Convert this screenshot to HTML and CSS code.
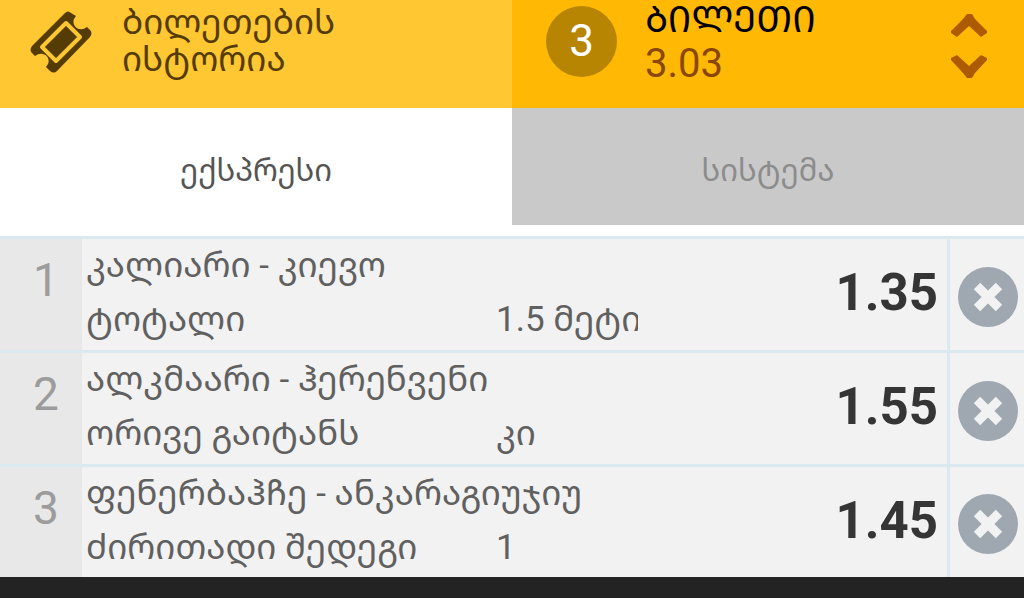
FILE: index.html
```
<!DOCTYPE html>
<html lang="ka">
<head>
    <meta charset="UTF-8">
    <meta name="viewport" content="width=device-width, initial-scale=1.0">
    <title>ბილეთი</title>
    <link rel="stylesheet" href="styles.css">
</head>
<body>
    <header class="top-bar">
        <a href="#" class="history">
            <svg class="ticket-icon" viewBox="0 0 62 62">
                <path fill="#553c04" d="M35 2Q38-1 41 2L46 5L44 8C42 13 46 18 50 18Q53 19 57 16L60 19Q63 22 60 26L27 60Q24 63 20 60L16 56L18 53C20 48 17 44 13 43Q9 42 5 45L2 42Q-1 39 2 35Z"/>
                <path fill="none" stroke="#ffc732" stroke-width="4" stroke-linejoin="round" d="M36 12L50 26L26 50L12 36Z"/>
            </svg>
            <span>ბილეთების<br>ისტორია</span>
        </a>
        <button class="ticket" type="button">
            <span class="count">3</span>
            <span class="ticket-info">
                <span class="ticket-title">ᲑᲘᲚᲔᲗᲘ</span>
                <span class="ticket-odds">3.03</span>
            </span>
            <svg class="arrows" viewBox="0 0 38 64">
                <path fill="#ad5b02" d="M17 0H22L25 5L37 17V19L31 23L19 12L7 23L1 19V17L13 5ZM17 64H22L25 59L37 46V44L31 41L19 52L7 41L1 44V46L13 59Z"/>
            </svg>
        </button>
    </header>

    <nav class="tabs">
        <button class="tab active" type="button">ექსპრესი</button>
        <button class="tab" type="button">სისტემა</button>
    </nav>

    <ul class="bets">
        <li class="bet">
            <div class="number">1</div>
            <div class="details">
                <p class="teams">კალიარი - კიევო</p>
                <p class="market"><span>ტოტალი</span><span class="pick">1.5 მეტი</span></p>
            </div>
            <div class="odds">1.35</div>
            <div class="remove">
                <button type="button" aria-label="წაშლა">
                    <svg viewBox="0 0 60 60"><path d="M19 19L41 41M41 19L19 41"/></svg>
                </button>
            </div>
        </li>
        <li class="bet">
            <div class="number">2</div>
            <div class="details">
                <p class="teams">ალკმაარი - ჰერენვენი</p>
                <p class="market"><span>ორივე გაიტანს</span><span class="pick">კი</span></p>
            </div>
            <div class="odds">1.55</div>
            <div class="remove">
                <button type="button" aria-label="წაშლა">
                    <svg viewBox="0 0 60 60"><path d="M19 19L41 41M41 19L19 41"/></svg>
                </button>
            </div>
        </li>
        <li class="bet">
            <div class="number">3</div>
            <div class="details">
                <p class="teams">ფენერბაჰჩე - ანკარაგიუჯიუ</p>
                <p class="market"><span>ძირითადი შედეგი</span><span class="pick">1</span></p>
            </div>
            <div class="odds">1.45</div>
            <div class="remove">
                <button type="button" aria-label="წაშლა">
                    <svg viewBox="0 0 60 60"><path d="M19 19L41 41M41 19L19 41"/></svg>
                </button>
            </div>
        </li>
    </ul>
</body>
</html>
```

FILE: styles.css
```
* {
    margin: 0;
    padding: 0;
    box-sizing: border-box;
}

body {
    font-family: Roboto, "Noto Sans Georgian", "DejaVu Sans Condensed", "DejaVu Sans", sans-serif;
    background: #232323;
    color: #606060;
    font-size: 35px;
}

button {
    border: none;
    font-family: inherit;
    cursor: pointer;
}

/* Top bar */
.top-bar {
    display: flex;
    height: 108px;
}

.history,
.ticket {
    width: 50%;
    display: flex;
    align-items: flex-start;
}

.history {
    gap: 30px;
    padding: 4px 30px;
    background: #ffc732;
    color: #553c04;
    line-height: 37px;
    text-decoration: none;
}

.ticket-icon {
    width: 62px;
    height: 62px;
    margin-top: 7px;
}

.ticket {
    gap: 28px;
    padding: 0 36px 0 34px;
    background: #ffb803;
    text-align: left;
}

.count {
    width: 71px;
    height: 71px;
    margin-top: 6px;
    border-radius: 50%;
    background: #b88502;
    color: #fff;
    font-size: 44px;
    line-height: 71px;
    text-align: center;
}

.ticket-info {
    flex: 1;
}

.ticket-title,
.ticket-odds {
    display: block;
}

.ticket-title {
    color: #000;
    font-size: 37px;
    line-height: 40px;
}

.ticket-odds {
    color: #8a4703;
    font-size: 40px;
    line-height: 48px;
}

.arrows {
    width: 38px;
    height: 64px;
    margin-top: 14px;
}

/* Tabs */
.tabs {
    display: flex;
    padding-bottom: 11px;
    background: #fff;
}

.tab {
    flex: 1;
    height: 117px;
    padding-top: 4px;
    background: #c9c9c9;
    color: #8c8c8c;
    font-size: 31px;
}

.tab.active {
    background: #fff;
    color: #555;
}

/* Bets */
.bets {
    list-style: none;
}

.bet {
    display: flex;
    border-top: 3px solid #dae8f0;
    background: #f2f2f2;
}

.number {
    width: 82px;
    padding: 14px 0 0 10px;
    background: #e8e8e8;
    color: #9c9c9c;
    font-size: 46px;
    line-height: 54px;
    text-align: center;
}

.details {
    flex: 1;
    padding: 0 0 3px 4px;
    line-height: 54px;
    white-space: nowrap;
}

.market {
    display: flex;
}

.market span:first-child {
    width: 410px;
}

.pick {
    width: 142px;
    overflow: hidden;
}

.odds {
    padding-right: 9px;
    color: #353535;
    font-size: 51px;
    font-weight: bold;
    line-height: 108px;
}

.remove {
    position: relative;
    display: flex;
    justify-content: center;
    align-items: center;
    width: 77px;
    padding: 4px 0 0 2px;
    border-left: 3px solid #dae8f0;
}

/* column line runs slightly past the last row */
.bet:last-child .remove::after {
    content: "";
    position: absolute;
    left: -3px;
    bottom: -3px;
    width: 3px;
    height: 3px;
    background: #fff;
}

.remove button {
    width: 60px;
    height: 60px;
    border-radius: 50%;
    background: #9fa8b0;
}

.remove svg {
    display: block;
    stroke: #f2f2f2;
    stroke-width: 9;
}

.bet:last-child .details {
    padding-bottom: 2px;
}
```
